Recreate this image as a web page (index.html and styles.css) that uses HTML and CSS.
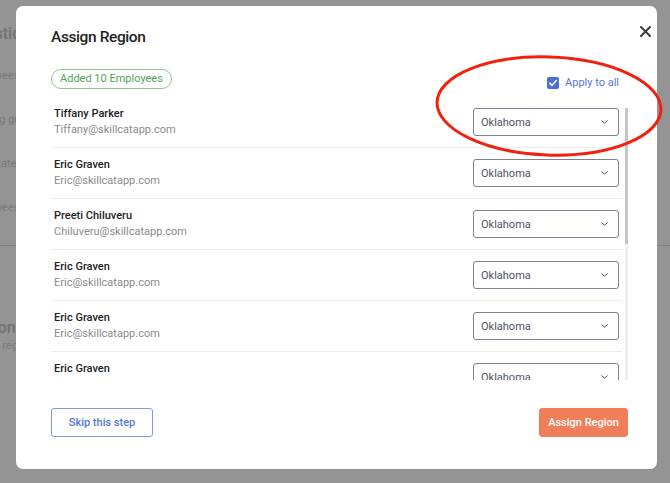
FILE: index.html
```html
<!DOCTYPE html>
<html>
<head>
    <link rel="stylesheet" href="styles.css">
</head>
<body>
    <div class="page">
        <div class="page-title">Questions</div>
        <div class="page-line">Employees list</div>
        <div class="page-line">Training groups</div>
        <div class="page-line">Certificates</div>
        <div class="page-line">Employees</div>
        <div class="page-rule"></div>
        <div class="page-title page-gap">Regions</div>
        <div class="page-line">Assign regions</div>
    </div>

    <div class="overlay">
        <div class="modal">
            <h2 class="modal-title">Assign Region</h2>
            <button class="close-btn" aria-label="Close">
                <svg width="11" height="11" viewBox="0 0 11 11">
                    <path d="M1 1 L10 10 M10 1 L1 10" stroke="#3d3d3d" stroke-width="2" stroke-linecap="round"/>
                </svg>
            </button>

            <div class="toolbar">
                <span class="badge">Added 10 Employees</span>
                <label class="apply-all">
                    <span class="checkbox">
                        <svg width="12" height="12" viewBox="0 0 12 12">
                            <path d="M2.8 6.2 L5 8.3 L9.3 3.6" stroke="#fff" stroke-width="1.6" fill="none" stroke-linecap="round" stroke-linejoin="round"/>
                        </svg>
                    </span>
                    Apply to all
                </label>
            </div>

            <div class="list-wrap">
                <div class="emp-list" id="empList"></div>
                <div class="scrollbar">
                    <div class="scroll-thumb"></div>
                </div>
            </div>

            <div class="modal-footer">
                <button class="btn btn-outline">Skip this step</button>
                <button class="btn btn-primary">Assign Region</button>
            </div>
        </div>

        <svg class="annotation" width="670" height="483" viewBox="0 0 670 483">
            <ellipse cx="549" cy="106" rx="112" ry="49" transform="rotate(2 549 106)" fill="none" stroke="#f2200f" stroke-width="3"/>
        </svg>
    </div>

    <script>
        // only the rows that fit in the visible part of the list
        const employees = [
            { name: 'Tiffany Parker', email: 'Tiffany@skillcatapp.com' },
            { name: 'Eric Graven', email: 'Eric@skillcatapp.com' },
            { name: 'Preeti Chiluveru', email: 'Chiluveru@skillcatapp.com' },
            { name: 'Eric Graven', email: 'Eric@skillcatapp.com' },
            { name: 'Eric Graven', email: 'Eric@skillcatapp.com' },
            { name: 'Eric Graven', email: '' }
        ];

        const empList = document.getElementById('empList');

        employees.forEach(function(emp) {
            const row = document.createElement('div');
            row.className = 'emp-row';
            row.innerHTML = `
                <div class="emp-info">
                    <div class="emp-name">${emp.name}</div>
                    <div class="emp-email">${emp.email}</div>
                </div>
                <div class="region-select">
                    <span>Oklahoma</span>
                    <svg width="7" height="4" viewBox="0 0 7 4">
                        <path d="M0.8 0.8 L3.5 3.2 L6.2 0.8" stroke="#4a4f5c" stroke-width="1" fill="none" stroke-linecap="round" stroke-linejoin="round"/>
                    </svg>
                </div>`;
            empList.appendChild(row);
        });
    </script>
</body>
</html>
```

FILE: styles.css
```css
body {
    margin: 0;
    background: #fff;
    font-family: Roboto, "Open Sans", sans-serif;
    overflow: hidden;
}
.page {
    padding: 24px 0 0 0;
    margin-left: -34px;
    color: #d2d2d2;
}
.page-title {
    font-size: 16px;
    font-weight: 500;
    color: #c4c4c4;
    margin-bottom: 26px;
}
.page-line {
    font-size: 11px;
    margin-bottom: 31px;
}
.page-rule {
    border-top: 1px solid #dcdcdc;
    margin: 20px 0 72px;
}
.page-gap {
    margin-bottom: 2px;
}
.overlay {
    position: fixed;
    inset: 0;
    background: rgba(0, 0, 0, 0.42);
    padding: 6px 13px 14px 16px;
}
.modal {
    position: relative;
    height: 463px;
    box-sizing: border-box;
    background: #fff;
    border-radius: 7px;
    padding: 21px 29px 32px 35px;
    display: flex;
    flex-direction: column;
}
.modal-title {
    margin: 0;
    font-size: 15.5px;
    line-height: 20px;
    font-weight: 500;
    letter-spacing: -0.4px;
    color: #1f1f1f;
}
.close-btn {
    position: absolute;
    top: 19px;
    right: 6px;
    background: none;
    border: none;
    padding: 0;
    cursor: pointer;
}
.toolbar {
    display: flex;
    justify-content: space-between;
    align-items: flex-end;
    margin-top: 22px;
    padding-right: 9px;
}
.badge {
    display: inline-block;
    height: 20px;
    box-sizing: border-box;
    line-height: 18px;
    padding: 0 8px;
    border: 1px solid #86c98a;
    border-radius: 10px;
    color: #4fa554;
    font-size: 11px;
}
.apply-all {
    display: flex;
    align-items: center;
    gap: 6px;
    color: #5279d6;
    font-size: 11px;
    line-height: 12px;
}
.checkbox {
    width: 12px;
    height: 12px;
    background: #4a6fd1;
    border-radius: 2px;
    display: flex;
}
.list-wrap {
    margin-top: 8px;
    height: 283px;
    display: flex;
}
.emp-list {
    flex: 1;
    overflow: hidden;
}
.scrollbar {
    width: 3px;
    margin: 11px 0 0 3px;
    background: #eeeeee;
}
.scroll-thumb {
    height: 136px;
    background: #c6c6c6;
}
.emp-row {
    height: 51px;
    box-sizing: border-box;
    border-bottom: 1px solid #ececec;
    display: flex;
    align-items: center;
    justify-content: space-between;
    padding: 0 3px;
}
.emp-info {
    font-size: 11px;
    line-height: 16px;
}
.emp-name {
    color: #222;
    font-weight: 500;
}
.emp-email {
    color: #8b8b8b;
    min-height: 16px;
}
.region-select {
    width: 146px;
    height: 28px;
    box-sizing: border-box;
    border: 1px solid #7b8193;
    border-radius: 3px;
    display: flex;
    align-items: center;
    justify-content: space-between;
    padding: 0 10px 0 7px;
    color: #4d5365;
    font-size: 11px;
}
.modal-footer {
    margin-top: auto;
    display: flex;
    justify-content: space-between;
}
.btn {
    height: 29px;
    box-sizing: border-box;
    border-radius: 3px;
    font-family: inherit;
    font-size: 11px;
    cursor: pointer;
}
.btn-outline {
    width: 102px;
    background: #fff;
    border: 1px solid #7d98e6;
    color: #5279d6;
    font-weight: 500;
}
.btn-primary {
    width: 89px;
    background: #f27d59;
    border: 1px solid #f27d59;
    color: #fff;
    font-weight: 500;
}
.annotation {
    position: absolute;
    left: 0;
    top: 0;
    pointer-events: none;
}
```
